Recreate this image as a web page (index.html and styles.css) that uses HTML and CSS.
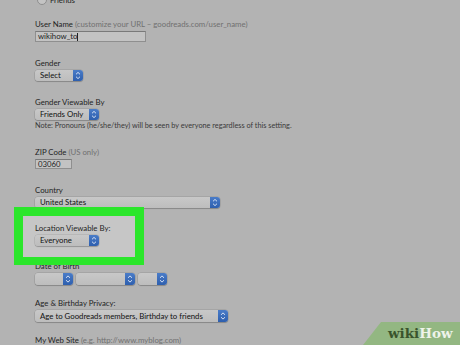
FILE: index.html
```html
<!DOCTYPE html>
<html lang="en">
<head>
  <meta charset="UTF-8">
  <meta name="viewport" content="width=device-width, initial-scale=1.0">
  <title>Edit Profile</title>
  <link rel="stylesheet" href="styles.css">
</head>
<body>
  <div class="form">
    <div class="radio-row"><span class="radio"></span>Friends</div>

    <div class="field">
      <div class="label">User Name <span class="hint">(customize your URL – goodreads.com/user_name)</span></div>
      <div class="input input-user">wikihow_to<span class="caret"></span></div>
    </div>

    <div class="field">
      <div class="label">Gender</div>
      <div class="select sel-gender"><span class="sel-text">Select</span><span class="arrows"><svg viewBox="0 0 10 11"><path d="M3 4.3 5 2.4 7 4.3M3 6.7 5 8.6 7 6.7"/></svg></span></div>
    </div>

    <div class="field field-tight">
      <div class="label">Gender Viewable By</div>
      <div class="select sel-short"><span class="sel-text">Friends Only</span><span class="arrows"><svg viewBox="0 0 10 11"><path d="M3 4.3 5 2.4 7 4.3M3 6.7 5 8.6 7 6.7"/></svg></span></div>
      <div class="note">Note: Pronouns (he/she/they) will be seen by everyone regardless of this setting.</div>
    </div>

    <div class="field">
      <div class="label">ZIP Code <span class="hint">(US only)</span></div>
      <div class="input input-zip">03060</div>
    </div>

    <div class="field field-country">
      <div class="label">Country</div>
      <div class="select sel-country"><span class="sel-text">United States</span><span class="arrows"><svg viewBox="0 0 10 11"><path d="M3 4.3 5 2.4 7 4.3M3 6.7 5 8.6 7 6.7"/></svg></span></div>
    </div>

    <div class="field highlight">
      <div class="label">Location Viewable By:</div>
      <div class="select sel-short"><span class="sel-text">Everyone</span><span class="arrows"><svg viewBox="0 0 10 11"><path d="M3 4.3 5 2.4 7 4.3M3 6.7 5 8.6 7 6.7"/></svg></span></div>
    </div>

    <div class="field field-dob">
      <div class="label">Date of Birth</div>
      <div class="dob">
        <div class="select sel-month"><span class="sel-text"></span><span class="arrows"><svg viewBox="0 0 10 11"><path d="M3 4.3 5 2.4 7 4.3M3 6.7 5 8.6 7 6.7"/></svg></span></div>
        <div class="select sel-day"><span class="sel-text"></span><span class="arrows"><svg viewBox="0 0 10 11"><path d="M3 4.3 5 2.4 7 4.3M3 6.7 5 8.6 7 6.7"/></svg></span></div>
        <div class="select sel-year"><span class="sel-text"></span><span class="arrows"><svg viewBox="0 0 10 11"><path d="M3 4.3 5 2.4 7 4.3M3 6.7 5 8.6 7 6.7"/></svg></span></div>
      </div>
    </div>

    <div class="field field-dob">
      <div class="label">Age &amp; Birthday Privacy:</div>
      <div class="select sel-age"><span class="sel-text">Age to Goodreads members, Birthday to friends</span><span class="arrows"><svg viewBox="0 0 10 11"><path d="M3 4.3 5 2.4 7 4.3M3 6.7 5 8.6 7 6.7"/></svg></span></div>
    </div>

    <div class="field">
      <div class="label">My Web Site <span class="hint">(e.g. http://www.myblog.com)</span></div>
    </div>
  </div>

  <div class="logo"><span class="wiki">wiki</span><span class="how">How</span></div>
</body>
</html>
```

FILE: styles.css
```css
html {
  overflow: hidden;
}

body {
  margin: 0;
  height: 345px;
  background: #b3b3b3;
  font-family: Lato, 'Open Sans', sans-serif;
  font-size: 7.8px;
  color: #1f1f1f;
  overflow: hidden;
}

.form {
  padding-left: 35px;
}

.radio-row {
  display: flex;
  align-items: center;
  gap: 3px;
  height: 10px;
  margin-top: -5px;
  margin-bottom: 14px;
  line-height: 10px;
}

.radio {
  width: 8px;
  height: 8px;
  margin-left: 2px;
  border-radius: 50%;
  border: 1px solid #8e8e8e;
  background: #c4c4c4;
}

.field {
  margin-bottom: 16px;
}

.field-country {
  margin-bottom: 15px;
}

.field-dob {
  margin-bottom: 13px;
}

.label,
.note {
  line-height: 10px;
  white-space: nowrap;
}

.hint {
  color: #707070;
}

.note {
  margin-top: 1px;
  font-size: 7.3px;
  color: #3a3a3a;
}

.input {
  box-sizing: border-box;
  height: 11px;
  margin-top: 2px;
  padding-left: 2px;
  border: 1px solid #8f8f8f;
  border-top-color: #7a7a7a;
  background: #c3c3c3;
  line-height: 9px;
  display: flex;
  align-items: center;
}

.input-user {
  width: 111px;
}

.input-zip {
  width: 37px;
  height: 10px;
}

.caret {
  width: 1px;
  height: 8px;
  background: #222;
}

.select {
  box-sizing: border-box;
  display: flex;
  height: 11px;
  margin-top: 2px;
  border-radius: 3px;
  background: linear-gradient(#c8c8c8, #bdbdbd);
  box-shadow: 0 1px 1px rgba(0, 0, 0, 0.18), 0 0 0 0.5px rgba(0, 0, 0, 0.15);
  line-height: 11px;
  color: #111;
}

.sel-text {
  flex: 1;
  padding-left: 5px;
  white-space: nowrap;
  overflow: hidden;
}

.arrows {
  width: 10px;
  height: 11px;
  border-radius: 0 3px 3px 0;
  background: linear-gradient(#4a7cc8, #2e5fae);
}

.arrows svg {
  display: block;
  width: 10px;
  height: 11px;
  fill: none;
  stroke: #e6edf8;
  stroke-width: 0.9;
}

.sel-gender { width: 48px; }
.sel-short { width: 64px; }
.sel-country { width: 185px; }
.sel-age { width: 193px; height: 12px; line-height: 12px; }
.sel-age .arrows, .sel-age .arrows svg { height: 12px; }

.dob {
  display: flex;
  gap: 3px;
}

.dob .select {
  height: 12px;
}

.dob .arrows,
.dob .arrows svg {
  height: 12px;
}

.sel-month { width: 38px; }
.sel-day { width: 59px; }
.sel-year { width: 29px; }

/* green highlight around Location field */
.highlight {
  position: relative;
  z-index: 1;
  box-sizing: border-box;
  width: 130px;
  margin: -16px 0 -4px -21px;
  padding: 7px 12px 11px;
  border: 9px solid #2be62b;
  border-bottom-width: 8px;
  background: #c6c6c6;
}

.logo {
  position: absolute;
  right: 0;
  bottom: 0;
  width: 97px;
  height: 23px;
  padding-left: 25px;
  box-sizing: border-box;
  background: #93b782;
  clip-path: polygon(18px 0, 100% 0, 100% 100%, 0 100%);
  font-family: 'DejaVu Serif', serif;
  font-weight: bold;
  font-size: 13.5px;
  line-height: 23px;
  white-space: nowrap;
}

.wiki {
  color: #3a542c;
}

.how {
  color: #eef3ea;
}
```
